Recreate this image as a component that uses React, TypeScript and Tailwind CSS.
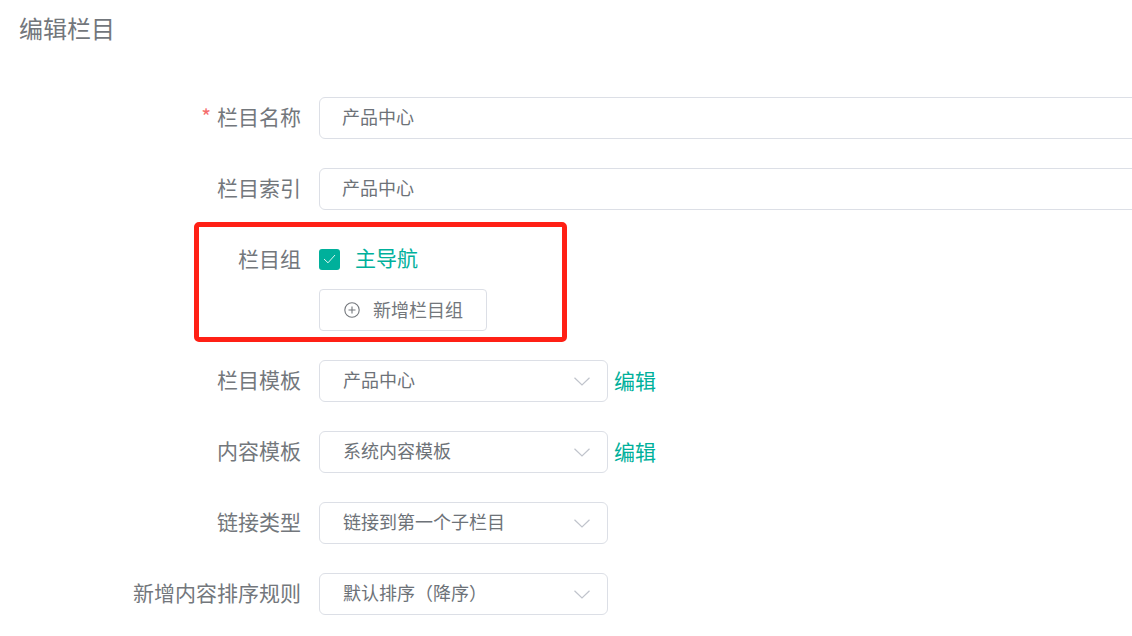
import { ReactNode } from "react";

const font = "font-['Noto_Sans_CJK_SC','Noto_Sans',sans-serif]";

function Row({ label, required, children, className = "mb-[29px]" }: { label: string; required?: boolean; children: ReactNode; className?: string }) {
  return (
    <div className={`flex items-start h-[42px] ${className}`}>
      <label className="w-[301px] shrink-0 text-right text-[21px] leading-[38px] text-[#73777c] whitespace-nowrap">
        {required && <span className="text-[#f56c6c] mr-[6px] text-[21px]">*</span>}
        {label}
      </label>
      <div className="ml-[18px] flex items-center h-[42px] min-w-0 flex-1">{children}</div>
    </div>
  );
}

function TextBox({ value }: { value: string }) {
  return (
    <div className="h-[42px] w-[1000px] shrink-0 rounded-[6px] border border-[#dcdfe6] pl-[22px] text-[18px] leading-[36px] text-[#6d7278]">
      {value}
    </div>
  );
}

function Select({ value, edit }: { value: string; edit?: boolean }) {
  return (
    <>
      <div className="flex items-center justify-between h-[42px] w-[289px] rounded-[6px] border border-[#dcdfe6] pl-[23px] pr-[17px] text-[18px] text-[#6d7278]">
        <span className="mb-[4px]">{value}</span>
        <svg width="16" height="9" viewBox="0 0 16 9" fill="none" stroke="#c0c4cc" strokeWidth="1.2">
          <path d="M0.5 0.8 L8 8 L15.5 0.8" />
        </svg>
      </div>
      {edit && <a className="ml-[6px] text-[21px] text-[#00b09b]">编辑</a>}
    </>
  );
}

export default function App() {
  return (
    <div className={`relative h-[636px] w-[1132px] overflow-hidden bg-white ${font}`}>
      <h2 className="pl-[19px] pt-[10px] text-[24px] leading-[36px] text-[#73777c]">编辑栏目</h2>
      <form className="mt-[51px]">
        <Row label="栏目名称" required>
          <TextBox value="产品中心" />
        </Row>
        <Row label="栏目索引">
          <TextBox value="产品中心" />
        </Row>
        <Row label="栏目组" className="mb-[8px]">
          <span className="mb-[2px] flex h-[21px] w-[21px] items-center justify-center rounded-[3px] bg-[#00b09b]">
            <svg width="13" height="10" viewBox="0 0 13 10" fill="none" stroke="#dff5f1" strokeWidth="1">
              <path d="M1 5 L5 8.8 L12 1" />
            </svg>
          </span>
          <span className="mb-[4px] ml-[15px] text-[21px] text-[#00b09b]">主导航</span>
        </Row>
        <Row label="">
          <button type="button" className="flex h-[42px] w-[168px] items-center rounded-[4px] border border-[#dcdfe6] pl-[24px] text-[18px] text-[#73777c]">
            <svg width="16" height="16" viewBox="0 0 16 16" fill="none" stroke="#73777c" strokeWidth="1.1">
              <circle cx="8" cy="8" r="7.2" />
              <path d="M8 4.5 V11.5 M4.5 8 H11.5" />
            </svg>
            <span className="mb-[2px] ml-[13px]">新增栏目组</span>
          </button>
        </Row>
        <Row label="栏目模板">
          <Select value="产品中心" edit />
        </Row>
        <Row label="内容模板">
          <Select value="系统内容模板" edit />
        </Row>
        <Row label="链接类型">
          <Select value="链接到第一个子栏目" />
        </Row>
        <Row label="新增内容排序规则">
          <Select value="默认排序（降序）" />
        </Row>
      </form>
      {/* annotation drawn over the screenshot */}
      <div className="absolute left-[194px] top-[222px] h-[120px] w-[373px] rounded-[5px] border-[5px] border-[#ff2015]" />
    </div>
  );
}
